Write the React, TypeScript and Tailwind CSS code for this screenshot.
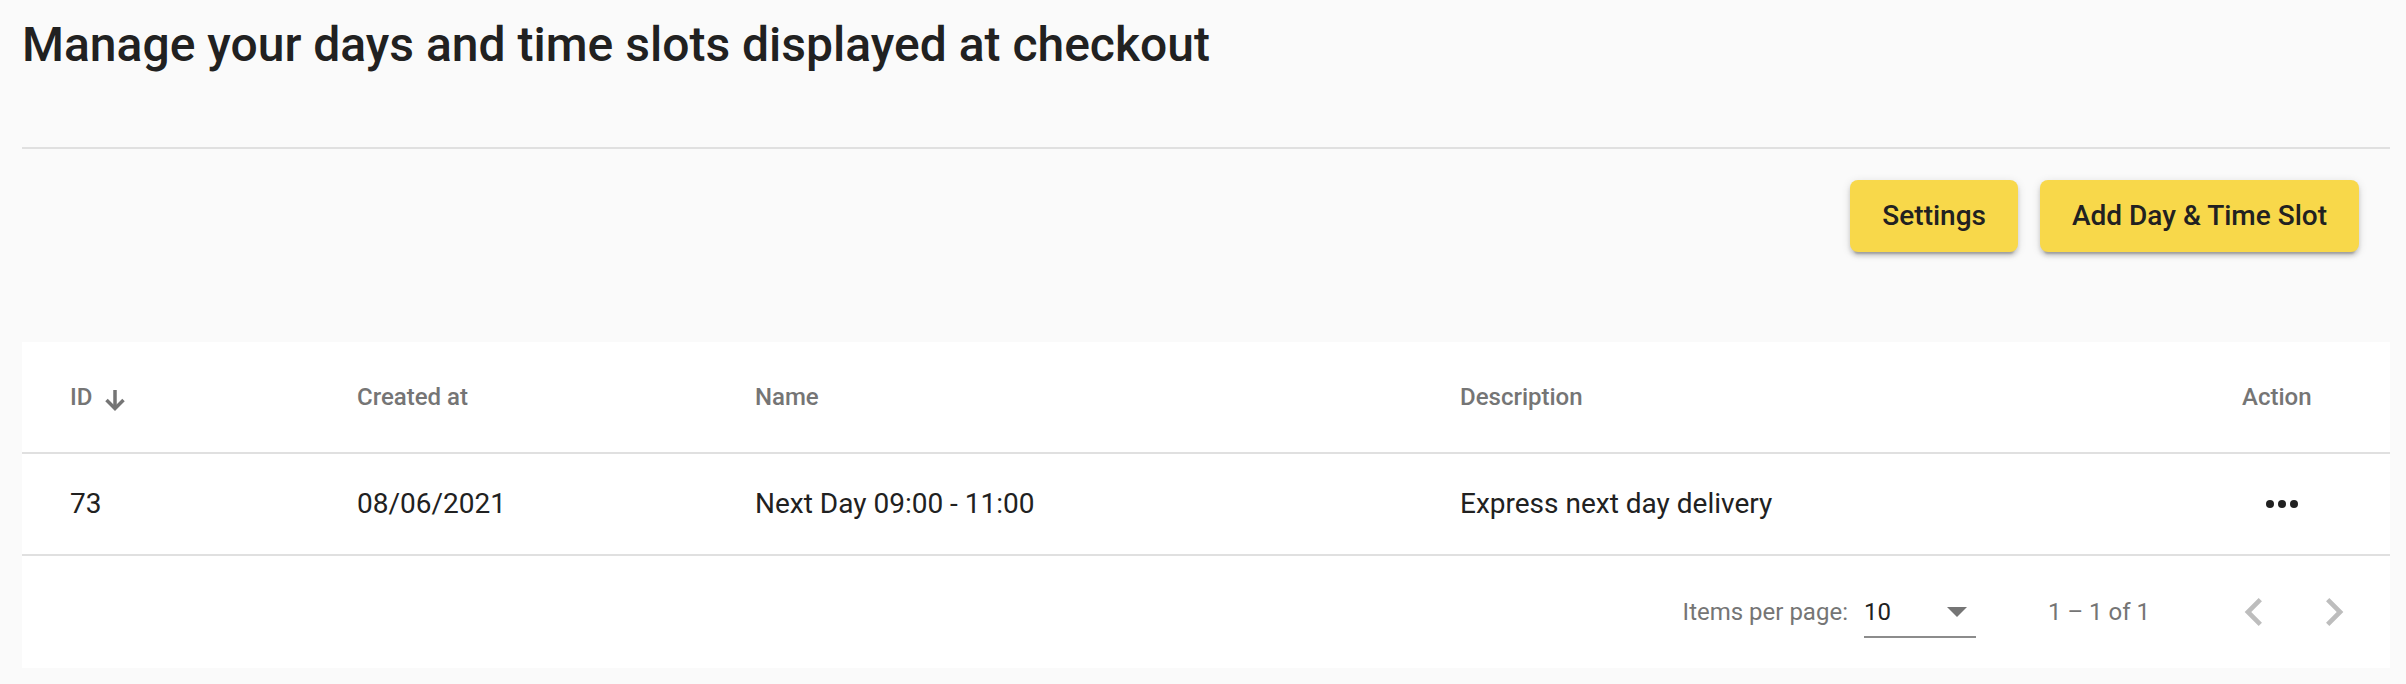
import React from 'react';

const rows = [
  { id: '73', created: '08/06/2021', name: 'Next Day 09:00 - 11:00', description: 'Express next day delivery' },
];

const cols = 'grid grid-cols-[287px_398px_705px_782px_1fr] pl-[48px] items-center';

function SortArrow() {
  return (
    <svg width="22" height="22" viewBox="0 0 22 22" className="ml-[12px] mt-[6px]">
      <path d="M11 1v18" stroke="#757575" strokeWidth="3.5" fill="none" />
      <path d="M2.5 11l8.5 8.5 8.5-8.5" stroke="#757575" strokeWidth="3.5" fill="none" />
    </svg>
  );
}

function MoreHoriz() {
  return (
    <svg width="48" height="48" viewBox="0 0 24 24" fill="#212121">
      <circle cx="6" cy="12" r="2" />
      <circle cx="12" cy="12" r="2" />
      <circle cx="18" cy="12" r="2" />
    </svg>
  );
}

export default function App() {
  return (
    <div className="min-h-screen bg-[#fafafa] pl-[22px] pr-[16px] pb-[16px] font-['Roboto',sans-serif] text-[#212121]">
      <h1 className="pt-[17px] text-[48px] leading-[56px] font-medium">
        Manage your days and time slots displayed at checkout
      </h1>

      <div className="mt-[74px] h-[2px] bg-[#e0e0e0]" />

      {/* toolbar */}
      <div className="mt-[31px] flex justify-end gap-[22px] pr-[31px]">
        <button className="h-[72px] px-[32px] rounded-[8px] bg-[#f8d84a] text-[28px] font-medium text-[#212121] shadow-[0_6px_2px_-4px_rgba(0,0,0,0.2),0_4px_4px_0_rgba(0,0,0,0.14),0_2px_10px_0_rgba(0,0,0,0.12)]">
          Settings
        </button>
        <button className="h-[72px] px-[32px] rounded-[8px] bg-[#f8d84a] text-[28px] font-medium text-[#212121] shadow-[0_6px_2px_-4px_rgba(0,0,0,0.2),0_4px_4px_0_rgba(0,0,0,0.14),0_2px_10px_0_rgba(0,0,0,0.12)]">
          Add Day &amp; Time Slot
        </button>
      </div>

      {/* table */}
      <div className="mt-[90px] bg-white">
        <div className={`${cols} h-[112px] border-b-2 border-[#e0e0e0] text-[24px] font-medium text-[#757575]`}>
          <div className="flex items-center">
            ID
            <SortArrow />
          </div>
          <div>Created at</div>
          <div>Name</div>
          <div>Description</div>
          <div>Action</div>
        </div>

        {rows.map((r) => (
          <div key={r.id} className={`${cols} h-[102px] border-b-2 border-[#e0e0e0] text-[28px]`}>
            <div>{r.id}</div>
            <div>{r.created}</div>
            <div>{r.name}</div>
            <div>{r.description}</div>
            <div className="ml-[16px]">
              <MoreHoriz />
            </div>
          </div>
        ))}

        {/* paginator */}
        <div className="h-[112px] flex items-center justify-end pr-[16px] text-[24px] text-[#757575]">
          <span className="mr-[16px]">Items per page:</span>
          <div className="w-[112px] pt-[10px]">
            <div className="h-[32px] flex items-center justify-between">
              <span className="text-[#212121]">10</span>
              <svg width="20" height="10" viewBox="0 0 20 10" className="mr-[9px]">
                <path d="M0 0h20L10 10z" fill="#757575" />
              </svg>
            </div>
            <div className="mt-[8px] h-[2px] bg-[#8c8c8c]" />
          </div>
          <span className="ml-[72px] mr-[64px]">1 – 1 of 1</span>
          <button className="w-[80px] h-[80px] flex items-center justify-center">
            <svg width="56" height="56" viewBox="0 0 24 24" fill="#bdbdbd">
              <path d="M15.41 7.41L14 6l-6 6 6 6 1.41-1.41L10.83 12z" />
            </svg>
          </button>
          <button className="w-[80px] h-[80px] flex items-center justify-center">
            <svg width="56" height="56" viewBox="0 0 24 24" fill="#bdbdbd">
              <path d="M10 6L8.59 7.41 13.17 12l-4.58 4.59L10 18l6-6z" />
            </svg>
          </button>
        </div>
      </div>
    </div>
  );
}
